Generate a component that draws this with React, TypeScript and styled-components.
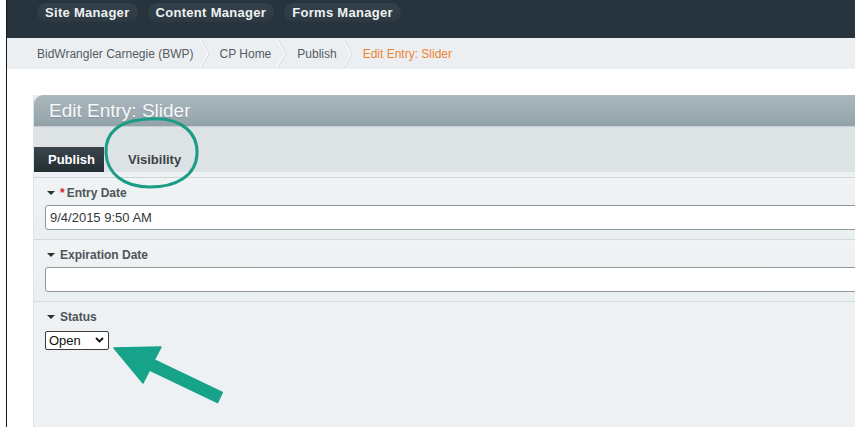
import React from "react";
import styled, { createGlobalStyle } from "styled-components";

const GlobalStyle = createGlobalStyle`
  html, body {
    margin: 0;
    padding: 0;
    background: #ffffff;
    font-family: "Liberation Sans", Arial, sans-serif;
  }
  * { box-sizing: border-box; }
`;

const Stage = styled.div`
  position: relative;
  width: 862px;
  height: 427px;
  overflow: hidden;
  background: #ffffff;
`;

const Frame = styled.div`
  margin-left: 6px;
  width: 849px;
  height: 427px;
  border-left: 1px solid #161616;
  display: flex;
  flex-direction: column;
`;

const NavBar = styled.nav`
  height: 38px;
  flex: none;
  background: #28343d;
  display: flex;
  align-items: flex-start;
  gap: 10px;
  padding: 3px 0 0 30px;
`;

const NavPill = styled.a`
  height: 19px;
  padding: 0 8px;
  border-radius: 10px;
  background: linear-gradient(#34414a, #2d3942);
  color: #eef1f2;
  font-weight: bold;
  font-size: 13px;
  letter-spacing: 0.3px;
  line-height: 19px;
  white-space: nowrap;
  text-decoration: none;
`;

const Crumbs = styled.div`
  height: 31px;
  flex: none;
  background: #eceff2;
  display: flex;
  align-items: stretch;
  padding-left: 30px;
`;

const Crumb = styled.span<{ $current?: boolean }>`
  display: flex;
  align-items: center;
  font-size: 12px;
  color: ${(p) => (p.$current ? "#ee8433" : "#555b5f")};
  white-space: nowrap;
`;

const CrumbSep = styled.svg`
  width: 10px;
  height: 31px;
  flex: none;
  margin: 0 10px 0 6px;
`;

const Gap = styled.div`
  height: 26px;
  flex: none;
`;

const Panel = styled.section`
  flex: 1;
  margin-left: 26px;
  display: flex;
  flex-direction: column;
  background: #edf1f3;
  border-left: 1px solid #dde3e6;
  overflow: hidden;
`;

const PanelHead = styled.header`
  height: 32px;
  flex: none;
  border-top-left-radius: 9px;
  background: linear-gradient(#abb8be, #93a2a9);
  border-bottom: 1px solid #c5ced2;
  display: flex;
  align-items: center;
  padding-left: 15px;
`;

const PanelTitle = styled.h1`
  margin: 0;
  font-size: 19px;
  font-weight: normal;
  color: #f7f9fa;
  text-shadow: 0 1px 0 rgba(80, 95, 102, 0.35);
`;

const TabBar = styled.div`
  height: 45px;
  flex: none;
  background: #dde2e4;
  display: flex;
  align-items: flex-end;
`;

const Tab = styled.div<{ $active?: boolean }>`
  height: 25px;
  padding: ${(p) => (p.$active ? "0 9px 0 14px" : "0 24px")};
  display: flex;
  align-items: center;
  font-size: 13px;
  font-weight: bold;
  color: ${(p) => (p.$active ? "#ffffff" : "#3c4246")};
  background: ${(p) =>
    p.$active ? "linear-gradient(#3a464c, #232d32)" : "transparent"};
`;

const TabFoot = styled.div`
  height: 6px;
  flex: none;
  background: #eef1f3;
  border-bottom: 1px solid #cfd6d9;
`;

const FieldRow = styled.div`
  flex: none;
  display: flex;
  flex-direction: column;
  gap: 5px;
  padding: 8px 0 9px 11px;
  background: linear-gradient(#f0f3f4, #eaeff1);
  border-bottom: 1px solid #d3d9dc;
`;

const LastRow = styled(FieldRow)`
  flex: 1;
  gap: 7px;
  border-bottom: none;
  background: #edf1f3;
`;

const FieldLabel = styled.label`
  display: flex;
  align-items: center;
  height: 14px;
  padding-left: 2px;
  font-size: 12px;
  font-weight: bold;
  color: #4e5458;
`;

const Caret = styled.span`
  width: 0;
  height: 0;
  border-left: 4px solid transparent;
  border-right: 4px solid transparent;
  border-top: 4px solid #2a2f33;
  margin-right: 5px;
`;

const Required = styled.span`
  color: #d6202a;
  margin-right: 2px;
`;

const TextInput = styled.input`
  width: calc(100% + 10px);
  height: 25px;
  border: 1px solid #8e979b;
  border-radius: 3px;
  background: #ffffff;
  padding: 0 4px;
  font-family: "Liberation Sans", Arial, sans-serif;
  font-size: 13px;
  color: #33383b;
  outline: none;
`;

const SelectWrap = styled.div`
  position: relative;
  width: 64px;
  height: 19px;
`;

const Select = styled.select`
  appearance: none;
  width: 64px;
  height: 19px;
  border: 1px solid #3a3a3a;
  border-radius: 2px;
  background: #ffffff;
  padding: 0 0 0 3px;
  font-family: "Liberation Sans", Arial, sans-serif;
  font-size: 13px;
  color: #111111;
  outline: none;
`;

const SelectChevron = styled.svg`
  position: absolute;
  right: 5px;
  top: 6px;
  width: 9px;
  height: 6px;
  pointer-events: none;
`;

const Markup = styled.svg`
  position: absolute;
  left: 0;
  top: 0;
  width: 862px;
  height: 427px;
  pointer-events: none;
`;

const Separator = () => (
  <CrumbSep viewBox="0 0 10 31">
    <polyline points="1,1 9,15.5 1,30" fill="none" stroke="#d2d8dc" strokeWidth="1" />
    <polyline points="0,1.5 8,15.5 0,29.5" fill="none" stroke="#ffffff" strokeWidth="1" />
  </CrumbSep>
);

const crumbs = ["BidWrangler Carnegie (BWP)", "CP Home", "Publish"];

export default function App() {
  return (
    <Stage>
      <GlobalStyle />
      <Frame>
        <NavBar>
          <NavPill>Site Manager</NavPill>
          <NavPill>Content Manager</NavPill>
          <NavPill>Forms Manager</NavPill>
        </NavBar>
        <Crumbs>
          {crumbs.map((c) => (
            <React.Fragment key={c}>
              <Crumb>{c}</Crumb>
              <Separator />
            </React.Fragment>
          ))}
          <Crumb $current>Edit Entry: Slider</Crumb>
        </Crumbs>
        <Gap />
        <Panel>
          <PanelHead>
            <PanelTitle>Edit Entry: Slider</PanelTitle>
          </PanelHead>
          <TabBar>
            <Tab $active>Publish</Tab>
            <Tab>Visibility</Tab>
          </TabBar>
          <TabFoot />
          <FieldRow>
            <FieldLabel>
              <Caret />
              <Required>*</Required>Entry Date
            </FieldLabel>
            <TextInput defaultValue="9/4/2015 9:50 AM" />
          </FieldRow>
          <FieldRow>
            <FieldLabel>
              <Caret />
              Expiration Date
            </FieldLabel>
            <TextInput defaultValue="" />
          </FieldRow>
          <LastRow>
            <FieldLabel>
              <Caret />
              Status
            </FieldLabel>
            <SelectWrap>
              <Select defaultValue="open">
                <option value="open">Open</option>
                <option value="closed">Closed</option>
              </Select>
              <SelectChevron viewBox="0 0 9 6">
                <polyline points="1,1 4.5,4.5 8,1" fill="none" stroke="#111" strokeWidth="1.8" />
              </SelectChevron>
            </SelectWrap>
          </LastRow>
        </Panel>
      </Frame>
      <Markup viewBox="0 0 862 427">
        <path
          d="M150 119 C 183 117, 198 134, 197 154 C 196 176, 176 187, 150 187 C 123 187, 107 173, 106 153 C 105 134, 117 120, 150 119 Z"
          fill="none"
          stroke="#1b9c87"
          strokeWidth="3"
        />
        <polygon
          points="114,348 161,347 154.3,360 222.3,392.5 217.6,402.5 149.6,370 143,383"
          fill="#17a38a"
          stroke="#17a38a"
          strokeWidth="1.5"
          strokeLinejoin="round"
        />
      </Markup>
    </Stage>
  );
}
